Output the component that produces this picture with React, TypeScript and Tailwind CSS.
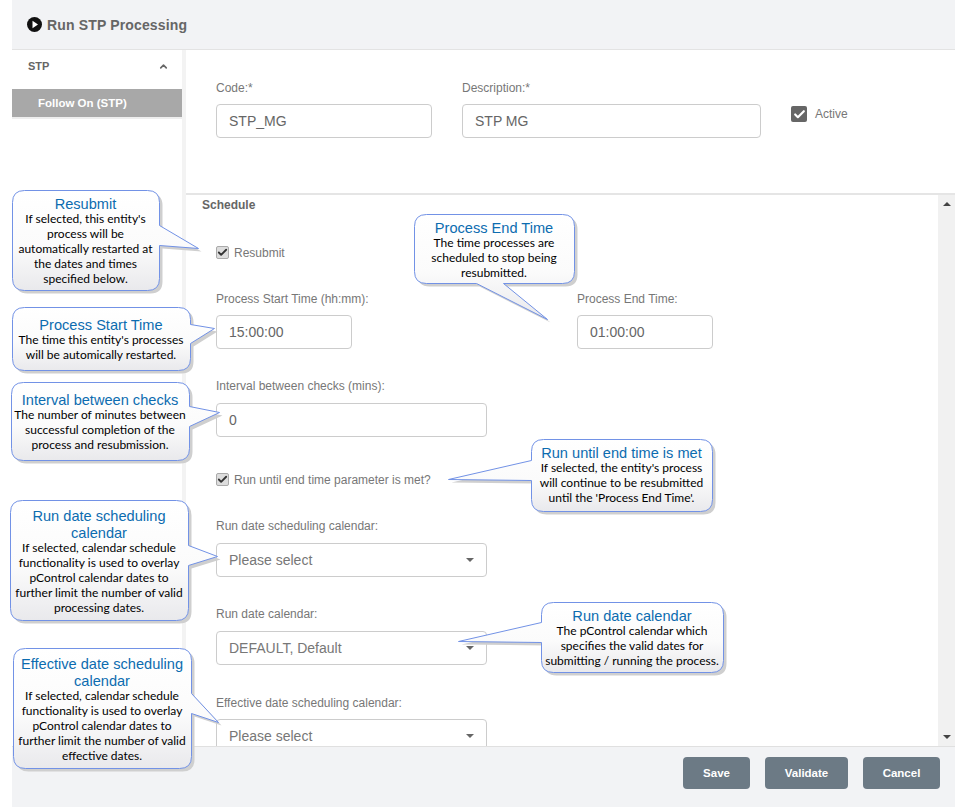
import { Check, ChevronUp } from 'lucide-react';
import type { ReactNode } from 'react';

const arial = 'font-["Liberation_Sans",Arial,sans-serif]';

type Tail = { side: 'left' | 'right' | 'bottom'; from: number; to: number; tipX: number; tipY: number };

function bubblePath(w: number, h: number, tail: Tail) {
  const r = 12;
  const { side, from, to, tipX, tipY } = tail;
  let d = `M${r} 0H${w - r}Q${w} 0 ${w} ${r}`;
  if (side === 'right') d += `V${from}L${tipX} ${tipY}L${w} ${to}`;
  d += `V${h - r}Q${w} ${h} ${w - r} ${h}`;
  if (side === 'bottom') d += `H${to}L${tipX} ${tipY}L${from} ${h}`;
  d += `H${r}Q0 ${h} 0 ${h - r}`;
  if (side === 'left') d += `V${to}L${tipX} ${tipY}L0 ${from}`;
  d += `V${r}Q0 0 ${r} 0Z`;
  return d;
}

function Callout({
  className,
  textClass,
  w,
  h,
  tail,
  title,
  lines,
}: {
  className: string;
  textClass: string;
  w: number;
  h: number;
  tail: Tail;
  title: string[];
  lines: string[];
}) {
  const d = bubblePath(w, h, tail);
  return (
    <div className={`absolute ${className}`}>
      <svg className="absolute inset-0 overflow-visible" width={w} height={h}>
        <defs>
          <linearGradient id="bubble" x1="0" y1="0" x2="0" y2="1">
            <stop offset="0" stopColor="#ffffff" />
            <stop offset="0.55" stopColor="#fbfbfb" />
            <stop offset="1" stopColor="#e9e9ec" />
          </linearGradient>
        </defs>
        <path d={d} transform="translate(3.5 3.5)" fill="#cfcfcf" />
        <path d={d} transform="translate(0.5 0.5)" fill="url(#bubble)" stroke="#7292e6" strokeWidth="1" />
      </svg>
      <div className={`relative flex flex-col items-center text-center ${textClass}`}>
        {title.map((t) => (
          <div key={t} className={`${arial} whitespace-nowrap text-[14.6px] leading-[17px] text-[#0c6cb0]`}>
            {t}
          </div>
        ))}
        <div className="-mt-[2px]">
          {lines.map((l) => (
            <div key={l} className="whitespace-nowrap font-['Lato',sans-serif] text-[12px] leading-[15px] text-black">
              {l}
            </div>
          ))}
        </div>
      </div>
    </div>
  );
}

function Label({ children, className = '' }: { children: ReactNode; className?: string }) {
  return <div className={`h-[17px] text-[12px] leading-[17px] text-[#777] ${className}`}>{children}</div>;
}

function Box({ value, className = '' }: { value: string; className?: string }) {
  return (
    <div
      className={`flex h-[34px] shrink-0 items-center rounded-[4px] border border-[#ccc] bg-white px-[12px] text-[14px] text-[#666] ${className}`}
    >
      {value}
    </div>
  );
}

function SelectBox({ value, className = '' }: { value: string; className?: string }) {
  return (
    <div
      className={`flex h-[34px] w-[271px] shrink-0 items-center justify-between rounded-[4px] border border-[#ccc] bg-white pl-[12px] pr-[12px] text-[14px] text-[#777] ${className}`}
    >
      <span>{value}</span>
      <span className="h-0 w-0 border-x-[4px] border-t-[4px] border-x-transparent border-t-[#666]" />
    </div>
  );
}

function SmallCheck({ label, className = '' }: { label: string; className?: string }) {
  return (
    <div className={`flex h-[16px] items-center ${className}`}>
      <span className="flex h-[13px] w-[13px] items-center justify-center rounded-[2px] border border-[#aaa] bg-[#ddd]">
        <Check size={11} strokeWidth={4} className="text-[#333]" />
      </span>
      <span className="ml-[5px] mt-[1px] text-[12px] text-[#777]">{label}</span>
    </div>
  );
}

function FooterButton({ label, className }: { label: string; className: string }) {
  return (
    <button className={`h-[32px] rounded-[4px] bg-[#6c7a85] pt-[1px] text-[11.5px] font-bold text-white ${className}`}>
      {label}
    </button>
  );
}

export default function App() {
  return (
    <div className={`${arial} relative flex h-[807px] w-[955px] flex-col overflow-hidden bg-white pl-[12px]`}>
      <header className="flex h-[50px] shrink-0 items-center gap-[5px] border-b border-[#e3e3e3] bg-[#f2f3f5] pl-[15px]">
        <svg width="15" height="15" viewBox="0 0 15 15">
          <circle cx="7.5" cy="7.5" r="7.5" fill="#111" />
          <path d="M5.5 3.8 11 7.5 5.5 11.2Z" fill="#fff" />
        </svg>
        <h1 className="pt-[1px] text-[14px] font-bold tracking-[0.15px] text-[#666]">Run STP Processing</h1>
      </header>

      <div className="flex min-h-0 flex-1">
        <aside className="w-[174px] shrink-0 border-r-[4px] border-[#f3f3f3]">
          <div className="flex h-[39px] items-center justify-between pb-[6px] pl-[16px] pr-[13px] text-[11px] font-bold text-[#666]">
            <span>STP</span>
            <ChevronUp size={11} strokeWidth={3.5} className="text-[#666]" />
          </div>
          <div className="flex h-[28px] items-center bg-[#a8a8a8] pl-[26px] pt-[1px] text-[11.5px] font-bold text-white shadow-[0_2px_0_#eeeeee]">
            Follow On (STP)
          </div>
        </aside>

        <main className="flex min-w-0 flex-1 flex-col">
          <section className="flex h-[145px] shrink-0 border-b-2 border-[#e5e5e5] pl-[30px] pt-[30px]">
            <div className="w-[216px]">
              <Label>Code:*</Label>
              <Box value="STP_MG" className="mt-[7px]" />
            </div>
            <div className="ml-[30px] w-[299px]">
              <Label>Description:*</Label>
              <Box value="STP MG" className="mt-[7px]" />
            </div>
            <div className="ml-[30px] mt-[26px] flex h-[16px] items-center">
              <span className="flex h-[16px] w-[16px] items-center justify-center rounded-[2px] bg-[#666]">
                <Check size={13} strokeWidth={4} className="text-white" />
              </span>
              <span className="ml-[8px] text-[12px] text-[#777]">Active</span>
            </div>
          </section>

          <section className="flex min-h-0 flex-1 overflow-hidden">
            <div className="min-w-0 flex-1 overflow-hidden pl-[30px] pt-[2px]">
              <div className="-ml-[14px] h-[17px] text-[12px] font-bold leading-[17px] text-[#666]">Schedule</div>
              <SmallCheck label="Resubmit" className="mt-[30px]" />
              <div className="mt-[31px] flex">
                <div className="w-[361px]">
                  <Label>Process Start Time (hh:mm):</Label>
                  <Box value="15:00:00" className="mt-[7px] w-[136px]" />
                </div>
                <div>
                  <Label>Process End Time:</Label>
                  <Box value="01:00:00" className="mt-[7px] w-[136px]" />
                </div>
              </div>
              <Label className="mt-[29px]">Interval between checks (mins):</Label>
              <Box value="0" className="mt-[8px] w-[271px]" />
              <SmallCheck label="Run until end time parameter is met?" className="mt-[34px]" />
              <Label className="mt-[31px]">Run date scheduling calendar:</Label>
              <SelectBox value="Please select" className="mt-[8px]" />
              <Label className="mt-[29px]">Run date calendar:</Label>
              <SelectBox value="DEFAULT, Default" className="mt-[8px]" />
              <Label className="mt-[30px]">Effective date scheduling calendar:</Label>
              <SelectBox value="Please select" className="mt-[7px]" />
            </div>
            <div className="flex w-[17px] shrink-0 flex-col items-center justify-between bg-[#f1f1f1] py-[7px]">
              <span className="h-0 w-0 border-x-[4px] border-b-[4px] border-x-transparent border-b-[#444]" />
              <span className="h-0 w-0 border-x-[4px] border-t-[4px] border-x-transparent border-t-[#444]" />
            </div>
          </section>
        </main>
      </div>

      <footer className="flex h-[61px] shrink-0 justify-end gap-[15px] border-t border-[#e0e0e0] bg-[#f2f3f5] pr-[15px] pt-[10px]">
        <FooterButton label="Save" className="w-[67px]" />
        <FooterButton label="Validate" className="w-[83px]" />
        <FooterButton label="Cancel" className="w-[77px]" />
      </footer>

      <Callout
        className="left-[12px] top-[190px] w-[147px]"
        textClass="pt-[6px]"
        w={147}
        h={100}
        tail={{ side: 'right', from: 35, to: 55, tipX: 186, tipY: 58 }}
        title={['Resubmit']}
        lines={["If selected, this entity's", 'process will be', 'automatically restarted at', 'the dates and times', 'specified below.']}
      />
      <Callout
        className="left-[12px] top-[307px] w-[178px]"
        textClass="pt-[10px]"
        w={178}
        h={63}
        tail={{ side: 'right', from: 17, to: 36, tipX: 202, tipY: 21 }}
        title={['Process Start Time']}
        lines={["The time this entity's processes", 'will be automically restarted.']}
      />
      <Callout
        className="left-[11px] top-[382px] w-[178px]"
        textClass="pt-[10px]"
        w={178}
        h={78}
        tail={{ side: 'right', from: 24, to: 44, tipX: 208, tipY: 30 }}
        title={['Interval between checks']}
        lines={['The number of minutes between', 'successful completion of the', 'process and resubmission.']}
      />
      <Callout
        className="left-[10px] top-[500px] w-[178px]"
        textClass="pt-[8px]"
        w={178}
        h={120}
        tail={{ side: 'right', from: 45, to: 65, tipX: 207, tipY: 56 }}
        title={['Run date scheduling', 'calendar']}
        lines={['If selected, calendar schedule', 'functionality is used to overlay', 'pControl calendar dates to', 'further limit the number of valid', 'processing dates.']}
      />
      <Callout
        className="left-[13px] top-[648px] w-[178px]"
        textClass="pt-[8px]"
        w={178}
        h={120}
        tail={{ side: 'right', from: 45, to: 65, tipX: 205, tipY: 74 }}
        title={['Effective date scheduling', 'calendar']}
        lines={['If selected, calendar schedule', 'functionality is used to overlay', 'pControl calendar dates to', 'further limit the number of valid', 'effective dates.']}
      />
      <Callout
        className="left-[414px] top-[214px] w-[160px]"
        textClass="pt-[6px]"
        w={160}
        h={69}
        tail={{ side: 'bottom', from: 62, to: 89, tipX: 133, tipY: 105 }}
        title={['Process End Time']}
        lines={['The time processes are', 'scheduled to stop being', 'resubmitted.']}
      />
      <Callout
        className="left-[531px] top-[439px] w-[181px]"
        textClass="pt-[6px]"
        w={181}
        h={72}
        tail={{ side: 'left', from: 21, to: 41, tipX: -83, tipY: 40 }}
        title={['Run until end time is met']}
        lines={["If selected, the entity's process", 'will continue to be resubmitted', "until the 'Process End Time'."]}
      />
      <Callout
        className="left-[541px] top-[602px] w-[182px]"
        textClass="pt-[6px]"
        w={182}
        h={70}
        tail={{ side: 'left', from: 20, to: 40, tipX: -83, tipY: 39 }}
        title={['Run date calendar']}
        lines={['The pControl calendar which', 'specifies the valid dates for', 'submitting / running the process.']}
      />
    </div>
  );
}
